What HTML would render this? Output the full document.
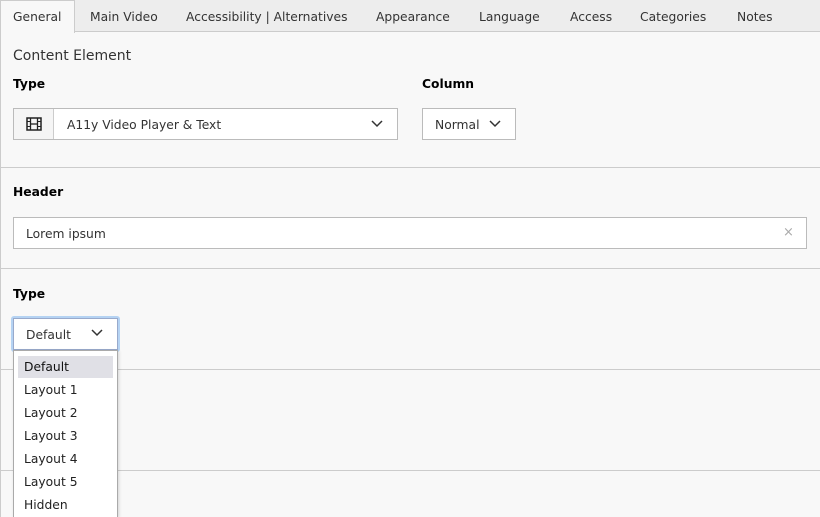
<!DOCTYPE html>
<html style="overflow:hidden;height:517px"><head><style>
*{box-sizing:border-box;margin:0;padding:0}
body{width:820px;height:517px;overflow:hidden;background:#f8f8f8;font-family:"DejaVu Sans","Liberation Sans",sans-serif;font-size:12.3px;color:#333;position:relative}
.tabs{position:absolute;left:0;top:0;width:820px;height:32px;background:#ededed;border-bottom:1px solid #ccc}
.tab{position:absolute;top:10px;color:#333;white-space:nowrap}
.gen{position:absolute;left:0;top:0;width:75px;height:33px;background:#f8f8f8;border:1px solid #ccc;border-bottom:none}
.abs{position:absolute;white-space:nowrap}
.b{font-weight:bold;color:#000}
.box{position:absolute;background:#fff;border:1px solid #bbb}
.sep{position:absolute;left:0;width:820px;height:1px;background:#ccc}
.chev{position:absolute}
</style></head><body>
<div style="position:absolute;left:0;top:32px;width:1px;height:485px;background:#ccc"></div>
<div class="tabs">
<div class="gen"></div>
<div class="tab" style="left:13px">General</div>
<div class="tab" style="left:90px">Main Video</div>
<div class="tab" style="left:186px">Accessibility | Alternatives</div>
<div class="tab" style="left:376px">Appearance</div>
<div class="tab" style="left:479px">Language</div>
<div class="tab" style="left:570px">Access</div>
<div class="tab" style="left:640px">Categories</div>
<div class="tab" style="left:737px">Notes</div>
</div>
<div class="abs" style="left:13px;top:48px;font-size:14px">Content Element</div>
<div class="abs b" style="left:13px;top:77px">Type</div>
<div class="box" style="left:13px;top:108px;width:385px;height:32px"></div>
<div style="position:absolute;left:14px;top:109px;width:40px;height:30px;background:#f5f5f5;border-right:1px solid #ccc"></div>
<svg style="position:absolute;left:26px;top:117px" width="16" height="14" viewBox="0 0 16 14"><rect x="1" y="1" width="14" height="12" fill="none" stroke="#222" stroke-width="1.5"/><line x1="4.5" y1="1" x2="4.5" y2="13" stroke="#222" stroke-width="1.3"/><line x1="11.5" y1="1" x2="11.5" y2="13" stroke="#222" stroke-width="1.3"/><line x1="4.5" y1="7" x2="11.5" y2="7" stroke="#222" stroke-width="1.3"/><line x1="1" y1="4.5" x2="4.5" y2="4.5" stroke="#222"/><line x1="1" y1="9.5" x2="4.5" y2="9.5" stroke="#222"/><line x1="11.5" y1="4.5" x2="15" y2="4.5" stroke="#222"/><line x1="11.5" y1="9.5" x2="15" y2="9.5" stroke="#222"/></svg>
<div class="abs" style="left:67px;top:118px">A11y Video Player &amp; Text</div>
<svg class="chev" style="left:371px;top:120px" width="12" height="8"><path d="M1 1L6 6L11 1" fill="none" stroke="#333" stroke-width="1.5"/></svg>
<div class="abs b" style="left:422px;top:77px">Column</div>
<div class="box" style="left:422px;top:108px;width:94px;height:32px"></div>
<div class="abs" style="left:435px;top:118px">Normal</div>
<svg class="chev" style="left:489px;top:120px" width="12" height="8"><path d="M1 1L6 6L11 1" fill="none" stroke="#333" stroke-width="1.5"/></svg>
<div class="sep" style="top:167px"></div>
<div class="abs b" style="left:13px;top:185px">Header</div>
<div class="box" style="left:13px;top:217px;width:794px;height:32px"></div>
<div class="abs" style="left:26px;top:227px">Lorem ipsum</div>
<div class="abs" style="left:783px;top:225px;color:#aaa;font-size:13px">×</div>
<div class="sep" style="top:268px"></div>
<div class="abs b" style="left:13px;top:287px">Type</div>
<div class="sep" style="top:369px"></div>
<div class="sep" style="top:470px"></div>
<div class="abs b" style="left:13px;top:489px;letter-spacing:1px">Accessibility</div>
<div class="box" style="left:11px;top:316px;width:109px;height:36px;border:2px solid #b5d3f3;border-radius:3px"></div>
<div class="box" style="left:13px;top:318px;width:105px;height:32px;border-color:#9ac"></div>
<div class="abs" style="left:26px;top:328px">Default</div>
<svg class="chev" style="left:91px;top:329px" width="12" height="8"><path d="M1 1L6 6L11 1" fill="none" stroke="#333" stroke-width="1.5"/></svg>
<div style="position:absolute;left:13px;top:350px;width:105px;height:167px;background:#fff;border:1px solid #aaa;border-bottom:none;box-shadow:1px 1px 3px rgba(0,0,0,.15)">
<div style="position:absolute;left:4px;top:5px;width:95px;height:22px;background:#e0e0e6"></div>
<div class="abs" style="left:10px;top:9px;color:#111">Default</div>
<div class="abs" style="left:10px;top:32px;color:#222">Layout 1</div>
<div class="abs" style="left:10px;top:55px;color:#222">Layout 2</div>
<div class="abs" style="left:10px;top:78px;color:#222">Layout 3</div>
<div class="abs" style="left:10px;top:101px;color:#222">Layout 4</div>
<div class="abs" style="left:10px;top:124px;color:#222">Layout 5</div>
<div class="abs" style="left:10px;top:147px;color:#222">Hidden</div>
</div>
</body></html>
